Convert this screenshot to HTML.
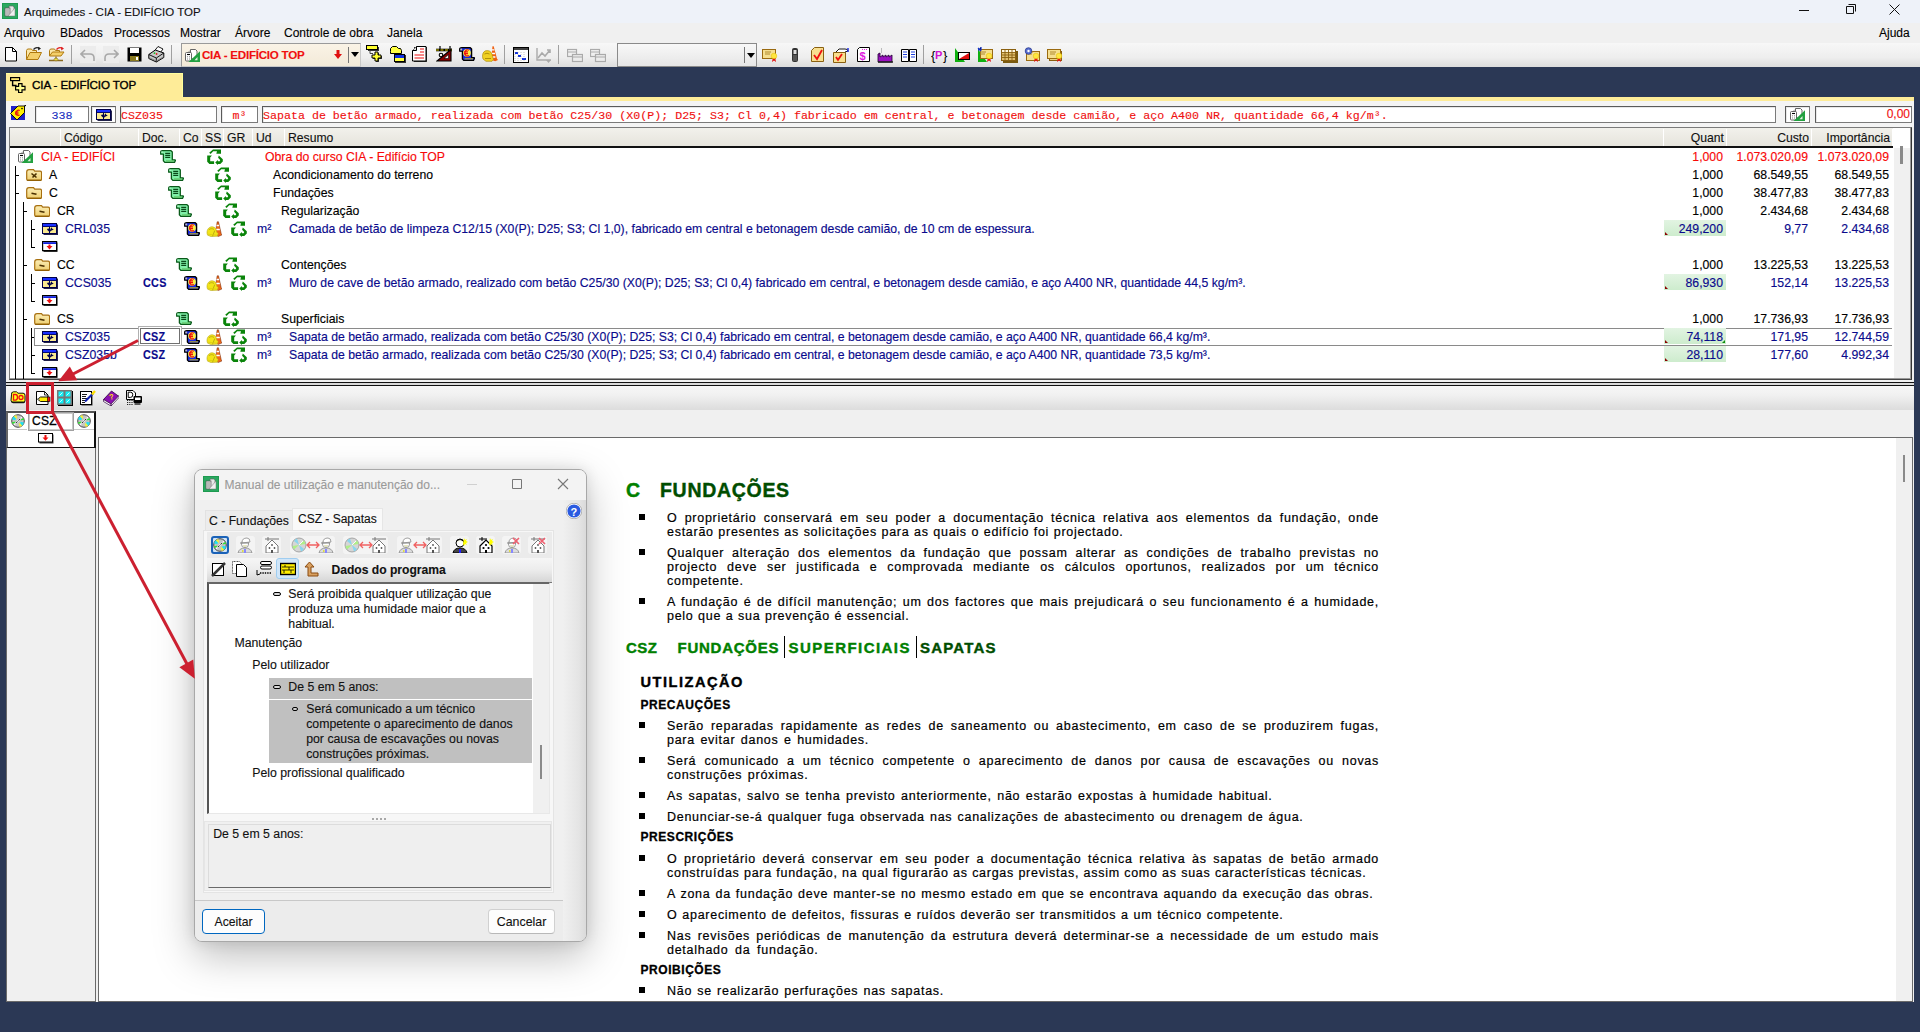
<!DOCTYPE html><html><head><meta charset="utf-8"><title>Arquimedes</title><style>
html,body{margin:0;padding:0;}
body{width:1920px;height:1032px;overflow:hidden;position:relative;background:#2b3855;font-family:"Liberation Sans", sans-serif;font-size:12px;color:#000;}
div{box-sizing:border-box;-webkit-text-stroke:0.12px currentColor;}
.t{position:absolute;white-space:pre;line-height:14px;}

</style></head><body>
<svg width="0" height="0" style="position:absolute">
<defs>
<symbol id="appico" viewBox="0 0 16 16"><rect x="0" y="0" width="16" height="16" fill="#1e9a50"/><rect x="1" y="1" width="14" height="14" fill="#2aa860"/><path d="M7 3h4l1 1v7H7z" fill="#e8e8e8" stroke="#666" stroke-width="0.7"/><rect x="3" y="5" width="5" height="8" fill="#ddd" stroke="#555" stroke-width="0.7"/><path d="M4 7h3M4 9h3M4 11h3" stroke="#666" stroke-width="0.6"/><path d="M6 13L13 5v8z" fill="#f0f0f0" stroke="#777" stroke-width="0.5"/></symbol>
<symbol id="obra" viewBox="0 0 15 13"><path d="M5.5 0.5h5l1.5 1.5v8h-6.5z" fill="#fff" stroke="#555" stroke-width="0.9"/><path d="M3 3.5l1.5-1.5h1" fill="none" stroke="#777" stroke-width="0.7"/><rect x="0.5" y="3.5" width="6" height="8.5" rx="1" fill="#fff" stroke="#555" stroke-width="0.9"/><path d="M2 5.5h3" stroke="#000" stroke-width="1.1"/><path d="M2 7.8h1M4 7.8h1M2 10h1M4 10h1" stroke="#777" stroke-width="0.9"/><path d="M3.5 13L15 13V2.2z" fill="#22a040"/><path d="M9.5 11.2h3v-3.2z" fill="#e0f0e0"/></symbol>
<symbol id="folderP" viewBox="0 0 16 12"><path d="M0.7 3Q0.7 0.6 3 0.6h4.5l1.2 1.6h5.3q1.6 0 1.6 1.8v6.2q0 1.2-1.2 1.2H2Q0.7 11.4 0.7 10z" fill="url(#fg)" stroke="#a87010" stroke-width="1.2"/><path d="M1 11.2h14" stroke="#8a5a00" stroke-width="1"/><path d="M5.5 4.5l5 4M6.5 8.5l4-4" stroke="#4a3000" stroke-width="1.6"/></symbol>
<symbol id="folderM" viewBox="0 0 16 12"><path d="M0.7 3Q0.7 0.6 3 0.6h4.5l1.2 1.6h5.3q1.6 0 1.6 1.8v6.2q0 1.2-1.2 1.2H2Q0.7 11.4 0.7 10z" fill="url(#fg)" stroke="#a87010" stroke-width="1.2"/><path d="M1 11.2h14" stroke="#8a5a00" stroke-width="1"/><path d="M5.5 6.2l5 1" stroke="#4a3000" stroke-width="1.6"/></symbol>
<linearGradient id="fg" x1="0" y1="0" x2="0" y2="1"><stop offset="0" stop-color="#fbeeb8"/><stop offset="1" stop-color="#efcf70"/></linearGradient>
<symbol id="item" viewBox="0 0 16 12"><rect x="1.5" y="1.5" width="14.5" height="10.5" fill="#22224a"/><rect x="0" y="0" width="15" height="11" fill="#00004a"/><rect x="1" y="1" width="13" height="2.2" fill="#1a30ff"/><rect x="1" y="4" width="6" height="6" fill="#faea90"/><rect x="8" y="4" width="6" height="6" fill="#faea90"/><path d="M6 5.3L8.2 6.8L9.3 4.2L10.3 5.8L11.8 6.6L8.6 8L7.4 10.3L6.8 8.2L5 6.7z" fill="#00004a"/></symbol>
<symbol id="addrow" viewBox="0 0 16 11"><rect x="1.5" y="1.5" width="14" height="9.5" fill="#333"/><rect x="0.6" y="0.6" width="14" height="9" fill="#fff" stroke="#000" stroke-width="1.2"/><rect x="1.2" y="1.2" width="12.8" height="1.8" fill="#1020e0"/><path d="M4.5 5h6l-3 3.5z" fill="#f01010"/><rect x="6.5" y="3.5" width="2" height="2.5" fill="#f01010"/></symbol>
<symbol id="scroll" viewBox="0 0 16 13"><path d="M2.5 0.7h8.5l1.3 1.3v7.8h2.8l0.4 0.6-1 2.1H5l-1.6-1.6V4.2H0.7V2.3Q0.7 0.7 2.5 0.7z" fill="#80f0a8" stroke="#0a5a1a" stroke-width="1.3" stroke-linejoin="round"/><path d="M1.3 2.2h1.3" stroke="#c0ffd0" stroke-width="1.2"/><path d="M5.2 3.4h5M5.2 5.4h5M5.2 7.4h5" stroke="#0a4a1a" stroke-width="1.1"/><path d="M6 11h8" stroke="#60c060" stroke-width="1.2"/></symbol>
<symbol id="recycle" viewBox="0 0 16 16"><g fill="#0a840a"><path d="M2.2 3.8L6 0.4H14V4.7H9.3L10 2.3H6.2L3.6 5z"/><path d="M0.2 6.4H4.9L3.2 8.4V12.3H7.1V15H2.4L0.2 12.8z"/><path d="M11.8 6.6L15.8 10.2V12.6L13.3 15H10.9V16L8.2 13.5L10.9 10.9V12.3H12.7L13.2 11L11.1 8.8z"/></g></symbol>
<symbol id="euro" viewBox="0 0 16 14"><path d="M2.7 0.7h8.6l1.3 1.3v8.6h2.7l0.2 0.6-1 2.2H4.7l-1.3-1.3V4.2H0.7V2Q0.7 0.7 2.7 0.7z" fill="#1a28e0" stroke="#000" stroke-width="1.3" stroke-linejoin="round"/><rect x="1.3" y="1.6" width="1.8" height="1.8" fill="#bbb"/><circle cx="8" cy="5.8" r="3.9" fill="#f8f040"/><path d="M10 3.2q-2.6-1.3-3.8 1.2t0.6 4q1.6 1 3.2 0M5 4.9h4M5 6.7h4" stroke="#f01010" stroke-width="1.2" fill="none"/><path d="M5.5 11.8h8.5" stroke="#a09a40" stroke-width="1.4"/></symbol>
<symbol id="helmet" viewBox="0 0 16 16"><path d="M9 13.5L11.2 0.8h1.3L15.2 12.5l0.6 1.6-3.6 1.4z" fill="#f06818" stroke="#6a2000" stroke-width="0.5"/><path d="M10.5 4.5h2.6M9.9 8.5h3.9" stroke="#fff" stroke-width="1.5"/><path d="M1 12.2C0.8 7.8 3.5 5.6 6.5 5.8C9.2 6 10.6 8.6 10.8 11.2L12.2 12.6L11.2 15.2L5 15.6L1.6 14.2z" fill="#f2e418" stroke="#b8a820" stroke-width="0.6"/><path d="M3 8.6C4.6 7.4 6.4 7.4 8 8.4M6.5 15.2L8.8 9.5" stroke="#b0a010" stroke-width="0.8" fill="none"/><path d="M2 13.2l8.8 1" stroke="#d8c810" stroke-width="0.7"/></symbol>
<symbol id="cd" viewBox="0 0 16 16"><circle cx="8" cy="8" r="7.2" fill="#c4c4c4" stroke="#333" stroke-width="1"/><path d="M8 8L3.2 2.6A7 7 0 0 1 6.2 1.2z" fill="#f0f040"/><path d="M8 8L1.2 6.2A7 7 0 0 1 3.2 2.6z" fill="#20e0f0"/><path d="M8 8L14.8 9.8A7 7 0 0 1 12.8 13.4z" fill="#20e0f0"/><path d="M8 8L12.8 13.4A7 7 0 0 1 9.8 14.8z" fill="#f0f040"/><path d="M8 8L1 9.5A7 7 0 0 0 2 11.5z" fill="#30e030"/><path d="M8 8L15 6.5A7 7 0 0 0 14 4.5z" fill="#30e030"/><circle cx="8" cy="8" r="3.2" fill="#c4c4c4"/><path d="M3.5 12.5l9-9" stroke="#fff" stroke-width="1.2"/><path d="M5.5 10.5l5-5" stroke="#000" stroke-width="0.9"/><circle cx="8" cy="8" r="0.9" fill="#fff"/></symbol>
<symbol id="tabico" viewBox="0 0 16 16"><rect x="0.6" y="0.6" width="9" height="3" fill="#ffe870" stroke="#000" stroke-width="1.2"/><path d="M2.6 4v4.5h4" stroke="#000" fill="none" stroke-width="1.4"/><path d="M8.6 6.6h3.4v2.8h3v3.4h-3v2.8H8.6v-2.8h-3V9.4h3z" fill="#ffff90" stroke="#000" stroke-width="1.2"/></symbol>
<symbol id="eurotag" viewBox="0 0 16 16"><rect x="1" y="1" width="14" height="14" fill="#2020c8"/><path d="M0.5 8.5L8 1h6.5v6.5L7 15z" fill="#ffee00" stroke="#000" stroke-width="0.9"/><path d="M14.5 1L16 0" stroke="#000" stroke-width="1.2"/><circle cx="12" cy="3.6" r="0.8" fill="#000"/><path d="M9.8 5.5q-2.2-1.2-3.4 1t0.4 3.6q1.4 0.8 2.8 0M5 7.2h3.5M5 8.9h3.5" stroke="#e81010" stroke-width="1.2" fill="none"/></symbol>
<symbol id="help" viewBox="0 0 16 16"><circle cx="8" cy="8" r="7.2" fill="#2a5ae0" stroke="#fff" stroke-width="1.2"/><circle cx="8" cy="8" r="7.8" fill="none" stroke="#777" stroke-width="0.5"/><text x="4.6" y="12.5" font-size="11" font-family="Liberation Sans" font-weight="bold" fill="#fff">?</text></symbol>
</defs></svg>
<div style="position:absolute;left:0px;top:0px;width:1920px;height:23px;background:#eef2f9"></div>
<svg style="position:absolute;left:2px;top:3px;" width="16" height="16"><use href="#appico" width="16" height="16"/></svg>
<div style="position:absolute;left:24px;top:5px;white-space:pre;font-size:11.5px;line-height:14px;color:#111">Arquimedes - CIA - EDIFÍCIO TOP</div>
<svg style="position:absolute;left:1790px;top:0" width="130" height="22"><path d="M9 10.5h10" stroke="#111" stroke-width="1"/><path d="M56.5 6.5h7v7h-7z M58.5 4.5h7v7" stroke="#111" fill="none" stroke-width="1"/><path d="M99.5 4.5l10 10M109.5 4.5l-10 10" stroke="#111" stroke-width="1"/></svg>
<div style="position:absolute;left:0px;top:23px;width:1920px;height:20px;background:#f0f0f0"></div>
<div style="position:absolute;left:4px;top:26px;white-space:pre;font-size:12px;line-height:14px;color:#000">Arquivo</div>
<div style="position:absolute;left:60px;top:26px;white-space:pre;font-size:12px;line-height:14px;color:#000">BDados</div>
<div style="position:absolute;left:114px;top:26px;white-space:pre;font-size:12px;line-height:14px;color:#000">Processos</div>
<div style="position:absolute;left:180px;top:26px;white-space:pre;font-size:12px;line-height:14px;color:#000">Mostrar</div>
<div style="position:absolute;left:235px;top:26px;white-space:pre;font-size:12px;line-height:14px;color:#000">Árvore</div>
<div style="position:absolute;left:284px;top:26px;white-space:pre;font-size:12px;line-height:14px;color:#000">Controle de obra</div>
<div style="position:absolute;left:387px;top:26px;white-space:pre;font-size:12px;line-height:14px;color:#000">Janela</div>
<div style="position:absolute;left:1879px;top:26px;white-space:pre;font-size:12px;line-height:14px;color:#000">Ajuda</div>
<div style="position:absolute;left:0px;top:43px;width:1920px;height:24px;background:linear-gradient(#f7f7f7,#eeeeee 60%,#dcdcdc)"></div>
<svg style="position:absolute;left:4px;top:47px" width="14" height="15" viewBox="0 0 14 15"><path d="M1.5 0.5h7l4 4v9.5h-11z" fill="#fff" stroke="#000"/><path d="M8.5 0.5v4h4" fill="none" stroke="#000"/></svg>
<svg style="position:absolute;left:25px;top:46px" width="17" height="15" viewBox="0 0 17 15"><path d="M1.5 13.5V4.5l1-1.5h4l1 1.5h4v2" fill="#fbe7a8" stroke="#b07a10" stroke-width="1"/><path d="M1.5 13.5l3.5-7h11.5l-3.5 7z" fill="#f4cf6a" stroke="#b07a10" stroke-width="1"/><path d="M8.5 3.5q2.5-3 6-1.2" stroke="#222" fill="none" stroke-width="1.2"/><path d="M13 0.8l3 1.8-2.8 1.8z" fill="#222"/></svg>
<svg style="position:absolute;left:48px;top:46px" width="17" height="16" viewBox="0 0 17 16"><path d="M1.5 10V4.5l1-1.5h4l1 1.5h4v2" fill="#fbe7a8" stroke="#b07a10" stroke-width="1"/><path d="M1.5 10l3-4h11.5l-3 4z" fill="#f4cf6a" stroke="#b07a10" stroke-width="1"/><path d="M8 10.5v3M1 14.5h14" stroke="#8a6a20" stroke-width="1.3"/><ellipse cx="8" cy="13.5" rx="2" ry="1.3" fill="#e8e040" stroke="#8a6a20" stroke-width="0.6"/><path d="M8.5 3.5q2.5-3 6-1.2" stroke="#e02020" fill="none" stroke-width="1.2"/><path d="M13 0.8l3 1.8-2.8 1.8z" fill="#e02020"/></svg>
<div style="position:absolute;left:71px;top:45px;width:1px;height:19px;background:#a0a0a0"></div>
<div style="position:absolute;left:80px;top:46px;width:16px;height:17px;background:#ececec"></div>
<svg style="position:absolute;left:80px;top:48px" width="16" height="15" viewBox="0 0 16 15"><path d="M5 2L1 6l4 4M1.5 6H10q4 0 4 4v3" fill="none" stroke="#a8a8a8" stroke-width="1.6"/></svg>
<div style="position:absolute;left:103px;top:46px;width:16px;height:17px;background:#ececec"></div>
<svg style="position:absolute;left:103px;top:48px" width="16" height="15" viewBox="0 0 16 15"><path d="M11 2l4 4-4 4M14.5 6H6q-4 0-4 4v3" fill="none" stroke="#a8a8a8" stroke-width="1.6"/></svg>
<svg style="position:absolute;left:127px;top:47px" width="15" height="15" viewBox="0 0 15 15"><rect x="0.5" y="0.5" width="14" height="14" fill="#000"/><rect x="3" y="1" width="9" height="5" fill="#fff"/><rect x="3" y="9" width="9" height="5" fill="#8a7a20"/><rect x="9" y="10" width="2" height="3" fill="#fff"/></svg>
<svg style="position:absolute;left:148px;top:46px" width="17" height="17" viewBox="0 0 17 17"><path d="M6 5.5l4-5 5 2.5-3 4z" fill="#fff" stroke="#000" stroke-width="0.9"/><path d="M0.8 8.5l6.5-4.5 8.5 3v4.5l-7.5 4.5-7.5-3.5z" fill="#c8c8c8" stroke="#000" stroke-width="1"/><path d="M0.8 8.5l7.5 3.5 7.5-5M8.3 12v4" stroke="#000" fill="none" stroke-width="0.9"/><path d="M1 11.5l7.3 3.5 7.3-4.2" stroke="#777" fill="none" stroke-width="0.8"/><circle cx="6.5" cy="7.2" r="0.9" fill="#20c020"/><circle cx="8.6" cy="8" r="0.9" fill="#e02020"/></svg>
<div style="position:absolute;left:171px;top:45px;width:1px;height:19px;background:#a0a0a0"></div>
<div style="position:absolute;left:181px;top:43px;width:180px;height:24px;background:linear-gradient(#faf3e6,#f3ead8);border:1px solid #9a9a9a;border-right-color:#c8c8c8;border-bottom-color:#c8c8c8"></div>
<svg style="position:absolute;left:185px;top:49px;" width="15" height="13"><use href="#obra" width="15" height="13"/></svg>
<div style="position:absolute;left:202px;top:47px;white-space:pre;font-size:11.6px;font-weight:bold;color:#f01010;line-height:15px;letter-spacing:-0.25px">CIA - EDIFÍCIO TOP</div>
<svg style="position:absolute;left:334px;top:50px" width="8" height="9" viewBox="0 0 8 9"><path d="M2.5 0h3v4h2.5l-4 5-4-5h2.5z" fill="#e01010"/></svg>
<div style="position:absolute;left:348px;top:47px;width:1px;height:16px;background:#777"></div>
<svg style="position:absolute;left:351px;top:52px" width="8" height="5" viewBox="0 0 8 5"><path d="M0 0h8l-4 5z" fill="#000"/></svg>
<svg style="position:absolute;left:366px;top:45px" width="17" height="18" viewBox="0 0 17 18"><rect x="2" y="2" width="11" height="4" fill="#333"/><rect x="0.5" y="0.5" width="11" height="4" fill="#ffff30" stroke="#000"/><path d="M4 5.5v3h3" stroke="#444" fill="none"/><path d="M10 8h3v3h3v3h-3v3h-3v-3H7v-3h3z" fill="#333"/><path d="M9 7h3v3h3v3h-3v3H9v-3H6v-3h3z" fill="#ffff30" stroke="#000"/></svg>
<svg style="position:absolute;left:389px;top:45px" width="17" height="18" viewBox="0 0 17 18"><path d="M1.5 6.5V3.5l2-2h4l2 2h2l1 2v3h-11z" fill="#ffff40" stroke="#000"/><rect x="6" y="10" width="11" height="8" fill="#333"/><rect x="5.5" y="9.5" width="10" height="7" fill="#1030e0" stroke="#000"/><rect x="6" y="13" width="9" height="3" fill="#ffff40"/></svg>
<svg style="position:absolute;left:412px;top:46px" width="16" height="17" viewBox="0 0 16 17"><rect x="2" y="1" width="13" height="15" fill="#333"/><path d="M4.5 0.5h9.5v14.5h-13.5v-10.5z" fill="#fff" stroke="#000"/><path d="M0.5 4.5h4v-4" fill="#ddd" stroke="#000"/><path d="M8 3h4M8 6h4M2.5 9h9.5M2.5 12h9.5" stroke="#f01010" stroke-width="1.1"/></svg>
<svg style="position:absolute;left:436px;top:46px" width="16" height="16" viewBox="0 0 16 16"><path d="M4 0v4M14 0v4" stroke="#000" stroke-width="1.2"/><path d="M0 4h16" stroke="#000" stroke-width="2.6"/><path d="M0 4h16" stroke="#ffee00" stroke-width="0.9" stroke-dasharray="3 1.5"/><path d="M1 15L15 3.5V15z" fill="#8a0000" stroke="#000" stroke-width="1.1"/><path d="M8 12.5l4.5-4v4z" fill="#eee" stroke="#000" stroke-width="0.6"/><circle cx="5" cy="9" r="1.8" fill="none" stroke="#000" stroke-width="1.1"/></svg>
<svg style="position:absolute;left:459px;top:47px;" width="16" height="14"><use href="#euro" width="16" height="14"/></svg>
<svg style="position:absolute;left:482px;top:46px" width="16" height="16" viewBox="0 0 16 16"><path d="M10.5 0.3h1.2l3.3 12.5 1 1.2-2.8 1.3-4.2-1.5z" fill="#f06010"/><path d="M9.8 3.8h2.6M9.2 7.5h3.8M8.8 11h4.6" stroke="#fff" stroke-width="1.3"/><path d="M0.5 10.5Q0.5 4.5 5.5 4.6Q10 4.8 10.8 11.5L11.6 13.2 10 15.3H4L1 13z" fill="#f0d020" stroke="#b09010" stroke-width="0.7"/><path d="M2.5 8q2.4-1.5 5 0M3 12.5h6" stroke="#a08000" stroke-width="0.8" fill="none"/></svg>
<div style="position:absolute;left:504px;top:45px;width:1px;height:19px;background:#a0a0a0"></div>
<svg style="position:absolute;left:513px;top:47px" width="16" height="16" viewBox="0 0 16 16"><rect x="0.5" y="0.5" width="15" height="15" fill="#fff" stroke="#000"/><path d="M1 2h14" stroke="#000" stroke-width="1.5"/><path d="M2 6h3M5 9h3M9 12h4" stroke="#1030e0" stroke-width="2"/><path d="M2 5v9M5 5v9M8 5v9M11 5v9" stroke="#888" stroke-width="0.5" stroke-dasharray="1 1"/></svg>
<svg style="position:absolute;left:536px;top:47px" width="16" height="16" viewBox="0 0 16 16"><path d="M1 1v12h14" stroke="#aaa" stroke-width="1.4" fill="none"/><path d="M2 11l4-5 3 3 5-6M11 3h3v3" stroke="#aaa" stroke-width="1.6" fill="none"/><path d="M10 13h5l-2.5 3z" fill="#aaa"/></svg>
<div style="position:absolute;left:558px;top:45px;width:1px;height:19px;background:#a0a0a0"></div>
<svg style="position:absolute;left:567px;top:48px" width="16" height="15" viewBox="0 0 16 15"><rect x="0.5" y="1.5" width="9" height="7" fill="none" stroke="#aaa" stroke-width="1.2"/><rect x="5.5" y="6.5" width="10" height="7" fill="#ececec" stroke="#aaa" stroke-width="1.2"/><path d="M1 4h8M6 9h9" stroke="#aaa"/></svg>
<svg style="position:absolute;left:590px;top:48px" width="16" height="15" viewBox="0 0 16 15"><rect x="0.5" y="1.5" width="9" height="7" fill="none" stroke="#aaa" stroke-width="1.2"/><rect x="5.5" y="6.5" width="10" height="7" fill="#ececec" stroke="#aaa" stroke-width="1.2"/><path d="M1 4h8M6 9h9" stroke="#aaa"/></svg>
<div style="position:absolute;left:617px;top:43px;width:140px;height:24px;background:linear-gradient(#f8f8f8,#e6e6e6);border:1px solid #8a8a8a"></div>
<div style="position:absolute;left:744px;top:47px;width:1px;height:16px;background:#777"></div>
<svg style="position:absolute;left:747px;top:53px" width="8" height="5" viewBox="0 0 8 5"><path d="M0 0h8l-4 5z" fill="#000"/></svg>
<svg style="position:absolute;left:762px;top:47px" width="16" height="16" viewBox="0 0 16 16"><rect x="0.5" y="2.5" width="13" height="9" fill="#f5df90" stroke="#9a6a10"/><path d="M3 5h6M3 7h5" stroke="#b08a30"/><path d="M11 10l-1 5 2-1.5 2 1.5-1-5" fill="#e01010"/><circle cx="12" cy="9" r="2.8" fill="#ffe640" stroke="#e0c000" stroke-width="0.5"/></svg>
<svg style="position:absolute;left:791px;top:47px" width="8" height="16" viewBox="0 0 8 16"><rect x="1" y="1" width="6" height="14" rx="2" fill="#333"/><rect x="2.5" y="3" width="3" height="4" fill="#ddd"/><path d="M2.5 9h1M4.5 9h1M2.5 11h1M4.5 11h1M2.5 13h1M4.5 13h1" stroke="#bbb"/></svg>
<svg style="position:absolute;left:810px;top:47px" width="15" height="16" viewBox="0 0 15 16"><path d="M1.5 3.5l3-3h9v14h-12z" fill="#f8df90" stroke="#8a6010"/><path d="M4 8l3 4 5-9" stroke="#f01010" stroke-width="1.8" fill="none"/></svg>
<svg style="position:absolute;left:833px;top:47px" width="16" height="16" viewBox="0 0 16 16"><path d="M0.5 5.5h12v10h-12z" fill="#f8df90" stroke="#8a6010"/><path d="M3 10l2 3 4-6" stroke="#f01010" stroke-width="1.8" fill="none"/><path d="M3 5l3-3h6q3 0 3 2l-3 1" fill="#fff" stroke="#000" stroke-width="0.9"/><path d="M15 1v4" stroke="#2030e0" stroke-width="1.5"/></svg>
<svg style="position:absolute;left:856px;top:47px" width="15" height="16" viewBox="0 0 15 16"><path d="M1.5 2.5l2-2h10v14h-12z" fill="#fff" stroke="#000"/><text x="3.5" y="13" font-size="11" font-family="Liberation Sans" font-weight="bold" fill="#e020e0">$</text><path d="M6 2.5h1M8 2.5h1M10 2.5h1" stroke="#e020e0"/></svg>
<svg style="position:absolute;left:877px;top:47px" width="16" height="16" viewBox="0 0 16 16"><path d="M1 15V7l2-1v4l3-2v2l3-2v2l3-2v2l3-2v7z" fill="#9a10c0" stroke="#200030" stroke-width="0.8"/><path d="M4 1h1v5H4z" fill="#bbb"/><path d="M1 15h15" stroke="#222" stroke-width="1.5"/></svg>
<svg style="position:absolute;left:901px;top:47px" width="16" height="16" viewBox="0 0 16 16"><path d="M0.5 2.5h7v12h-7zM8.5 2.5h7v12h-7z" fill="#fff" stroke="#000"/><path d="M2 5h4M2 7.5h4M2 10h4M10 5h4M10 7.5h4M10 10h4" stroke="#2040e0" stroke-width="1.2"/></svg>
<div style="position:absolute;left:923px;top:45px;width:1px;height:19px;background:#a0a0a0"></div>
<svg style="position:absolute;left:931px;top:47px" width="17" height="16" viewBox="0 0 17 16"><text x="0" y="13" font-size="13" font-family="Liberation Sans" fill="#000">{</text><text x="12" y="13" font-size="13" font-family="Liberation Sans" fill="#000">}</text><text x="4" y="12" font-size="11" font-family="Liberation Sans" font-weight="bold" fill="#d010d0">P</text></svg>
<svg style="position:absolute;left:954px;top:47px" width="16" height="16" viewBox="0 0 16 16"><path d="M1 1v14h10z" fill="#10b010"/><rect x="4.5" y="5.5" width="11" height="7" fill="#fff" stroke="#000"/><path d="M5 12l10-6v6z" fill="#e01010"/></svg>
<svg style="position:absolute;left:977px;top:47px" width="17" height="16" viewBox="0 0 17 16"><path d="M1 2v13h9z" fill="#10b010"/><rect x="3.5" y="2.5" width="12" height="9" fill="#f5df90" stroke="#9a6a10"/><path d="M3 5h6M3 7h5" stroke="#b08a30"/><path d="M11 10l-1 5 2-1.5 2 1.5-1-5" fill="#e01010"/><circle cx="12" cy="9" r="2.8" fill="#ffe640" stroke="#e0c000" stroke-width="0.5"/><path d="M1 1l3 3M1 3h3V0" stroke="#1030d0" stroke-width="1.2"/></svg>
<svg style="position:absolute;left:1001px;top:47px" width="17" height="16" viewBox="0 0 17 16"><rect x="2" y="4" width="15" height="12" fill="#7a5a10"/><rect x="0.5" y="2.5" width="14" height="11" fill="#e0c070" stroke="#8a6010"/><rect x="1" y="3" width="13" height="2.5" fill="#fff8e0"/><path d="M1 5.5h13M1 8h13M1 10.5h13M4 3v10M7.5 3v10M11 3v10" stroke="#8a6010" stroke-width="0.9"/></svg>
<svg style="position:absolute;left:1024px;top:47px" width="16" height="16" viewBox="0 0 16 16"><rect x="2.5" y="4.5" width="13" height="9" fill="#f5df90" stroke="#9a6a10"/><path d="M3 5h6M3 7h5" stroke="#b08a30"/><path d="M11 10l-1 5 2-1.5 2 1.5-1-5" fill="#e01010"/><circle cx="12" cy="9" r="2.8" fill="#ffe640" stroke="#e0c000" stroke-width="0.5"/><circle cx="4.5" cy="4" r="3.3" fill="#5a70d0" stroke="#2a3a90" stroke-width="0.8"/><circle cx="4.5" cy="4" r="1.2" fill="#fff"/></svg>
<svg style="position:absolute;left:1047px;top:47px" width="16" height="16" viewBox="0 0 16 16"><rect x="2.5" y="4.5" width="12" height="9" fill="#e8cf80" stroke="#8a6010"/><rect x="0.5" y="2.5" width="13" height="9" fill="#f5df90" stroke="#9a6a10"/><path d="M3 5h6M3 7h5" stroke="#b08a30"/><path d="M11 10l-1 5 2-1.5 2 1.5-1-5" fill="#e01010"/><circle cx="12" cy="9" r="2.8" fill="#ffe640" stroke="#e0c000" stroke-width="0.5"/></svg>
<div style="position:absolute;left:6px;top:73px;width:177px;height:24px;background:#feec98;border-top:1px solid #ffffa0;border-right:1px solid #ffff9a"></div>
<svg style="position:absolute;left:10px;top:77px;" width="16" height="16"><use href="#tabico" width="16" height="16"/></svg>
<div style="position:absolute;left:32px;top:78px;white-space:pre;font-size:11.6px;line-height:14px;color:#000;letter-spacing:-0.1px;-webkit-text-stroke:0.35px #000">CIA - EDIFÍCIO TOP</div>
<div style="position:absolute;left:6px;top:97px;width:1908px;height:4px;background:#feec98"></div>
<div style="position:absolute;left:6px;top:101px;width:1908px;height:901px;background:#f0f0f0"></div>
<div style="position:absolute;left:6px;top:101px;width:1908px;height:26px;background:#f4f4f4"></div>
<svg style="position:absolute;left:10px;top:105px;" width="16" height="16"><use href="#eurotag" width="16" height="16"/></svg>
<div style="position:absolute;left:35px;top:106px;width:54px;height:17px;background:#fff;border:1px solid #5a5a5a;border-right-color:#7a7a7a;border-bottom-color:#7a7a7a;box-shadow:inset 1px 1px 0 #e8e8e8"></div>
<div style="position:absolute;left:35px;top:108px;white-space:pre;width:54px;text-align:center;font-family:'Liberation Mono', monospace;font-size:11.65px;line-height:15px;color:#2030c0">338</div>
<div style="position:absolute;left:91px;top:106px;width:25px;height:17px;background:#fff;border:1px solid #5a5a5a;border-right-color:#7a7a7a;border-bottom-color:#7a7a7a;box-shadow:inset 1px 1px 0 #e8e8e8"></div>
<svg style="position:absolute;left:96px;top:109px;" width="16" height="12"><use href="#item" width="16" height="12"/></svg>
<div style="position:absolute;left:120px;top:106px;width:97px;height:17px;background:#fff;border:1px solid #5a5a5a;border-right-color:#7a7a7a;border-bottom-color:#7a7a7a;box-shadow:inset 1px 1px 0 #e8e8e8"></div>
<div style="position:absolute;left:121px;top:108px;white-space:pre;font-family:'Liberation Mono', monospace;font-size:11.65px;line-height:15px;color:#f01010">CSZ035</div>
<div style="position:absolute;left:221px;top:106px;width:37px;height:17px;background:#fff;border:1px solid #5a5a5a;border-right-color:#7a7a7a;border-bottom-color:#7a7a7a;box-shadow:inset 1px 1px 0 #e8e8e8"></div>
<div style="position:absolute;left:221px;top:108px;white-space:pre;width:37px;text-align:center;font-family:'Liberation Mono', monospace;font-size:11.65px;line-height:15px;color:#f01010">m³</div>
<div style="position:absolute;left:262px;top:106px;width:1514px;height:17px;background:#fff;border:1px solid #5a5a5a;border-right-color:#7a7a7a;border-bottom-color:#7a7a7a;box-shadow:inset 1px 1px 0 #e8e8e8"></div>
<div style="position:absolute;left:263px;top:108px;white-space:pre;font-family:'Liberation Mono', monospace;font-size:11.65px;line-height:15px;color:#f01010">Sapata de betão armado, realizada com betão C25/30 (X0(P); D25; S3; Cl 0,4) fabricado em central, e betonagem desde camião, e aço A400 NR, quantidade 66,4 kg/m³.</div>
<div style="position:absolute;left:1785px;top:106px;width:25px;height:17px;background:#fff;border:1px solid #5a5a5a;border-right-color:#7a7a7a;border-bottom-color:#7a7a7a;box-shadow:inset 1px 1px 0 #e8e8e8"></div>
<svg style="position:absolute;left:1790px;top:108px;" width="15" height="13"><use href="#obra" width="15" height="13"/></svg>
<div style="position:absolute;left:1815px;top:106px;width:97px;height:17px;background:#fff;border:1px solid #5a5a5a;border-right-color:#7a7a7a;border-bottom-color:#7a7a7a;box-shadow:inset 1px 1px 0 #e8e8e8"></div>
<div style="position:absolute;left:1815px;top:107px;white-space:pre;width:95px;text-align:right;font-size:12px;line-height:15px;color:#f01010">0,00</div>
<div style="position:absolute;left:9px;top:127px;width:1903px;height:253px;background:#fff;border:1px solid #7a7a7a;border-right:1px solid #333;border-bottom:1px solid #444;box-shadow:inset -1px -1px 0 #999"></div>
<div style="position:absolute;left:10px;top:128px;width:1883px;height:20px;background:linear-gradient(#f2f1ec,#e6e4dc);border-bottom:2px solid #111"></div>
<div style="position:absolute;left:60px;top:129px;width:1px;height:17px;background:#c8c6c0;border-right:1px solid #fff"></div>
<div style="position:absolute;left:138px;top:129px;width:1px;height:17px;background:#c8c6c0;border-right:1px solid #fff"></div>
<div style="position:absolute;left:179px;top:129px;width:1px;height:17px;background:#c8c6c0;border-right:1px solid #fff"></div>
<div style="position:absolute;left:201px;top:129px;width:1px;height:17px;background:#c8c6c0;border-right:1px solid #fff"></div>
<div style="position:absolute;left:223px;top:129px;width:1px;height:17px;background:#c8c6c0;border-right:1px solid #fff"></div>
<div style="position:absolute;left:252px;top:129px;width:1px;height:17px;background:#c8c6c0;border-right:1px solid #fff"></div>
<div style="position:absolute;left:284px;top:129px;width:1px;height:17px;background:#c8c6c0;border-right:1px solid #fff"></div>
<div style="position:absolute;left:1663px;top:129px;width:1px;height:17px;background:#c8c6c0;border-right:1px solid #fff"></div>
<div style="position:absolute;left:1726px;top:129px;width:1px;height:17px;background:#c8c6c0;border-right:1px solid #fff"></div>
<div style="position:absolute;left:1811px;top:129px;width:1px;height:17px;background:#c8c6c0;border-right:1px solid #fff"></div>
<div style="position:absolute;left:1892px;top:129px;width:1px;height:17px;background:#c8c6c0;border-right:1px solid #fff"></div>
<div style="position:absolute;left:64px;top:131px;white-space:pre;font-size:12.2px;line-height:14px;color:#111">Código</div>
<div style="position:absolute;left:142px;top:131px;white-space:pre;font-size:12.2px;line-height:14px;color:#111">Doc.</div>
<div style="position:absolute;left:183px;top:131px;white-space:pre;font-size:12.2px;line-height:14px;color:#111">Co</div>
<div style="position:absolute;left:205px;top:131px;white-space:pre;font-size:12.2px;line-height:14px;color:#111">SS</div>
<div style="position:absolute;left:227px;top:131px;white-space:pre;font-size:12.2px;line-height:14px;color:#111">GR</div>
<div style="position:absolute;left:256px;top:131px;white-space:pre;font-size:12.2px;line-height:14px;color:#111">Ud</div>
<div style="position:absolute;left:288px;top:131px;white-space:pre;font-size:12.2px;line-height:14px;color:#111">Resumo</div>
<div style="position:absolute;left:1604px;top:131px;white-space:pre;width:120px;text-align:right;font-size:12.2px;line-height:14px;color:#111">Quant</div>
<div style="position:absolute;left:1689px;top:131px;white-space:pre;width:120px;text-align:right;font-size:12.2px;line-height:14px;color:#111">Custo</div>
<div style="position:absolute;left:1770px;top:131px;white-space:pre;width:120px;text-align:right;font-size:12.2px;line-height:14px;color:#111">Importância</div>
<div style="position:absolute;left:1894px;top:148px;width:16px;height:230px;background:#f0f0f0"></div>
<div style="position:absolute;left:1900px;top:146px;width:3px;height:18px;background:#8a8a8a"></div>
<div style="position:absolute;left:15px;top:166px;width:1px;height:213px;background:#000"></div>
<div style="position:absolute;left:23px;top:202px;width:1px;height:177px;background:#000"></div>
<div style="position:absolute;left:31px;top:220px;width:1px;height:28px;background:#000"></div>
<div style="position:absolute;left:31px;top:247px;width:4px;height:1px;background:#000"></div>
<div style="position:absolute;left:31px;top:274px;width:1px;height:28px;background:#000"></div>
<div style="position:absolute;left:31px;top:301px;width:4px;height:1px;background:#000"></div>
<div style="position:absolute;left:31px;top:328px;width:1px;height:46px;background:#000"></div>
<div style="position:absolute;left:31px;top:373px;width:4px;height:1px;background:#000"></div>
<svg style="position:absolute;left:18px;top:150px;" width="15" height="13"><use href="#obra" width="15" height="13"/></svg>
<div style="position:absolute;left:41px;top:150px;white-space:pre;font-size:12.25px;line-height:14px;-webkit-text-stroke:0.15px currentColor;color:#f80808">CIA - EDIFÍCI</div>
<svg style="position:absolute;left:160px;top:150px;" width="16" height="13"><use href="#scroll" width="16" height="13"/></svg>
<svg style="position:absolute;left:207px;top:149px;" width="16" height="16"><use href="#recycle" width="16" height="16"/></svg>
<div style="position:absolute;left:265px;top:150px;white-space:pre;font-size:12.25px;line-height:14px;-webkit-text-stroke:0.15px currentColor;color:#f80808">Obra do curso CIA - Edifício TOP</div>
<div style="position:absolute;left:1573px;top:150px;white-space:pre;font-size:12.25px;line-height:14px;-webkit-text-stroke:0.15px currentColor;width:150px;text-align:right;color:#f80808">1,000</div>
<div style="position:absolute;left:1658px;top:150px;white-space:pre;font-size:12.25px;line-height:14px;-webkit-text-stroke:0.15px currentColor;width:150px;text-align:right;color:#f80808">1.073.020,09</div>
<div style="position:absolute;left:1739px;top:150px;white-space:pre;font-size:12.25px;line-height:14px;-webkit-text-stroke:0.15px currentColor;width:150px;text-align:right;color:#f80808">1.073.020,09</div>
<div style="position:absolute;left:15px;top:175px;width:4px;height:1px;background:#000"></div>
<svg style="position:absolute;left:26px;top:169px;" width="16" height="12"><use href="#folderP" width="16" height="12"/></svg>
<div style="position:absolute;left:49px;top:168px;white-space:pre;font-size:12.25px;line-height:14px;-webkit-text-stroke:0.15px currentColor;color:#000">A</div>
<svg style="position:absolute;left:168px;top:168px;" width="16" height="13"><use href="#scroll" width="16" height="13"/></svg>
<svg style="position:absolute;left:215px;top:167px;" width="16" height="16"><use href="#recycle" width="16" height="16"/></svg>
<div style="position:absolute;left:273px;top:168px;white-space:pre;font-size:12.25px;line-height:14px;-webkit-text-stroke:0.15px currentColor;color:#000">Acondicionamento do terreno</div>
<div style="position:absolute;left:1573px;top:168px;white-space:pre;font-size:12.25px;line-height:14px;-webkit-text-stroke:0.15px currentColor;width:150px;text-align:right;color:#000">1,000</div>
<div style="position:absolute;left:1658px;top:168px;white-space:pre;font-size:12.25px;line-height:14px;-webkit-text-stroke:0.15px currentColor;width:150px;text-align:right;color:#000">68.549,55</div>
<div style="position:absolute;left:1739px;top:168px;white-space:pre;font-size:12.25px;line-height:14px;-webkit-text-stroke:0.15px currentColor;width:150px;text-align:right;color:#000">68.549,55</div>
<div style="position:absolute;left:15px;top:193px;width:4px;height:1px;background:#000"></div>
<svg style="position:absolute;left:26px;top:187px;" width="16" height="12"><use href="#folderM" width="16" height="12"/></svg>
<div style="position:absolute;left:49px;top:186px;white-space:pre;font-size:12.25px;line-height:14px;-webkit-text-stroke:0.15px currentColor;color:#000">C</div>
<svg style="position:absolute;left:168px;top:186px;" width="16" height="13"><use href="#scroll" width="16" height="13"/></svg>
<svg style="position:absolute;left:215px;top:185px;" width="16" height="16"><use href="#recycle" width="16" height="16"/></svg>
<div style="position:absolute;left:273px;top:186px;white-space:pre;font-size:12.25px;line-height:14px;-webkit-text-stroke:0.15px currentColor;color:#000">Fundações</div>
<div style="position:absolute;left:1573px;top:186px;white-space:pre;font-size:12.25px;line-height:14px;-webkit-text-stroke:0.15px currentColor;width:150px;text-align:right;color:#000">1,000</div>
<div style="position:absolute;left:1658px;top:186px;white-space:pre;font-size:12.25px;line-height:14px;-webkit-text-stroke:0.15px currentColor;width:150px;text-align:right;color:#000">38.477,83</div>
<div style="position:absolute;left:1739px;top:186px;white-space:pre;font-size:12.25px;line-height:14px;-webkit-text-stroke:0.15px currentColor;width:150px;text-align:right;color:#000">38.477,83</div>
<div style="position:absolute;left:23px;top:211px;width:4px;height:1px;background:#000"></div>
<svg style="position:absolute;left:34px;top:205px;" width="16" height="12"><use href="#folderM" width="16" height="12"/></svg>
<div style="position:absolute;left:57px;top:204px;white-space:pre;font-size:12.25px;line-height:14px;-webkit-text-stroke:0.15px currentColor;color:#000">CR</div>
<svg style="position:absolute;left:176px;top:204px;" width="16" height="13"><use href="#scroll" width="16" height="13"/></svg>
<svg style="position:absolute;left:223px;top:203px;" width="16" height="16"><use href="#recycle" width="16" height="16"/></svg>
<div style="position:absolute;left:281px;top:204px;white-space:pre;font-size:12.25px;line-height:14px;-webkit-text-stroke:0.15px currentColor;color:#000">Regularização</div>
<div style="position:absolute;left:1573px;top:204px;white-space:pre;font-size:12.25px;line-height:14px;-webkit-text-stroke:0.15px currentColor;width:150px;text-align:right;color:#000">1,000</div>
<div style="position:absolute;left:1658px;top:204px;white-space:pre;font-size:12.25px;line-height:14px;-webkit-text-stroke:0.15px currentColor;width:150px;text-align:right;color:#000">2.434,68</div>
<div style="position:absolute;left:1739px;top:204px;white-space:pre;font-size:12.25px;line-height:14px;-webkit-text-stroke:0.15px currentColor;width:150px;text-align:right;color:#000">2.434,68</div>
<div style="position:absolute;left:31px;top:229px;width:4px;height:1px;background:#000"></div>
<svg style="position:absolute;left:42px;top:223px;" width="16" height="12"><use href="#item" width="16" height="12"/></svg>
<div style="position:absolute;left:65px;top:222px;white-space:pre;font-size:12.25px;line-height:14px;-webkit-text-stroke:0.15px currentColor;color:#0a0a8c">CRL035</div>
<svg style="position:absolute;left:184px;top:222px;" width="16" height="14"><use href="#euro" width="16" height="14"/></svg>
<svg style="position:absolute;left:206px;top:221px;" width="16" height="16"><use href="#helmet" width="16" height="16"/></svg>
<svg style="position:absolute;left:231px;top:221px;" width="16" height="16"><use href="#recycle" width="16" height="16"/></svg>
<div style="position:absolute;left:257px;top:222px;white-space:pre;font-size:12.25px;line-height:14px;-webkit-text-stroke:0.15px currentColor;color:#0a0a8c">m²</div>
<div style="position:absolute;left:289px;top:222px;white-space:pre;font-size:12.25px;line-height:14px;-webkit-text-stroke:0.15px currentColor;color:#0a0a8c">Camada de betão de limpeza C12/15 (X0(P); D25; S3; Cl 1,0), fabricado em central e betonagem desde camião, de 10 cm de espessura.</div>
<div style="position:absolute;left:1664px;top:220px;width:62px;height:16px;background:linear-gradient(#e2f4e2,#cdeccd)"></div>
<svg style="position:absolute;left:1665px;top:232px" width="3" height="3" viewBox="0 0 3 3"><path d="M0 0L3 3H0z" fill="#8a0000"/></svg>
<div style="position:absolute;left:1573px;top:222px;white-space:pre;font-size:12.25px;line-height:14px;-webkit-text-stroke:0.15px currentColor;width:150px;text-align:right;color:#0a0a8c">249,200</div>
<div style="position:absolute;left:1658px;top:222px;white-space:pre;font-size:12.25px;line-height:14px;-webkit-text-stroke:0.15px currentColor;width:150px;text-align:right;color:#0a0a8c">9,77</div>
<div style="position:absolute;left:1739px;top:222px;white-space:pre;font-size:12.25px;line-height:14px;-webkit-text-stroke:0.15px currentColor;width:150px;text-align:right;color:#0a0a8c">2.434,68</div>
<div style="position:absolute;left:31px;top:247px;width:4px;height:1px;background:#000"></div>
<svg style="position:absolute;left:42px;top:241px;" width="16" height="11"><use href="#addrow" width="16" height="11"/></svg>
<div style="position:absolute;left:23px;top:265px;width:4px;height:1px;background:#000"></div>
<svg style="position:absolute;left:34px;top:259px;" width="16" height="12"><use href="#folderM" width="16" height="12"/></svg>
<div style="position:absolute;left:57px;top:258px;white-space:pre;font-size:12.25px;line-height:14px;-webkit-text-stroke:0.15px currentColor;color:#000">CC</div>
<svg style="position:absolute;left:176px;top:258px;" width="16" height="13"><use href="#scroll" width="16" height="13"/></svg>
<svg style="position:absolute;left:223px;top:257px;" width="16" height="16"><use href="#recycle" width="16" height="16"/></svg>
<div style="position:absolute;left:281px;top:258px;white-space:pre;font-size:12.25px;line-height:14px;-webkit-text-stroke:0.15px currentColor;color:#000">Contenções</div>
<div style="position:absolute;left:1573px;top:258px;white-space:pre;font-size:12.25px;line-height:14px;-webkit-text-stroke:0.15px currentColor;width:150px;text-align:right;color:#000">1,000</div>
<div style="position:absolute;left:1658px;top:258px;white-space:pre;font-size:12.25px;line-height:14px;-webkit-text-stroke:0.15px currentColor;width:150px;text-align:right;color:#000">13.225,53</div>
<div style="position:absolute;left:1739px;top:258px;white-space:pre;font-size:12.25px;line-height:14px;-webkit-text-stroke:0.15px currentColor;width:150px;text-align:right;color:#000">13.225,53</div>
<div style="position:absolute;left:31px;top:283px;width:4px;height:1px;background:#000"></div>
<svg style="position:absolute;left:42px;top:277px;" width="16" height="12"><use href="#item" width="16" height="12"/></svg>
<div style="position:absolute;left:65px;top:276px;white-space:pre;font-size:12.25px;line-height:14px;-webkit-text-stroke:0.15px currentColor;color:#0a0a8c">CCS035</div>
<div style="position:absolute;left:143px;top:276px;white-space:pre;font-size:12px;font-weight:bold;line-height:14px;letter-spacing:0.3px;transform:scaleX(0.9);transform-origin:0 0;color:#0a0a8c">CCS</div>
<svg style="position:absolute;left:184px;top:276px;" width="16" height="14"><use href="#euro" width="16" height="14"/></svg>
<svg style="position:absolute;left:206px;top:275px;" width="16" height="16"><use href="#helmet" width="16" height="16"/></svg>
<svg style="position:absolute;left:231px;top:275px;" width="16" height="16"><use href="#recycle" width="16" height="16"/></svg>
<div style="position:absolute;left:257px;top:276px;white-space:pre;font-size:12.25px;line-height:14px;-webkit-text-stroke:0.15px currentColor;color:#0a0a8c">m³</div>
<div style="position:absolute;left:289px;top:276px;white-space:pre;font-size:12.25px;line-height:14px;-webkit-text-stroke:0.15px currentColor;color:#0a0a8c">Muro de cave de betão armado, realizado com betão C25/30 (X0(P); D25; S3; Cl 0,4) fabricado em central, e betonagem desde camião, e aço A400 NR, quantidade 44,5 kg/m³.</div>
<div style="position:absolute;left:1664px;top:274px;width:62px;height:16px;background:linear-gradient(#e2f4e2,#cdeccd)"></div>
<svg style="position:absolute;left:1665px;top:286px" width="3" height="3" viewBox="0 0 3 3"><path d="M0 0L3 3H0z" fill="#8a0000"/></svg>
<div style="position:absolute;left:1573px;top:276px;white-space:pre;font-size:12.25px;line-height:14px;-webkit-text-stroke:0.15px currentColor;width:150px;text-align:right;color:#0a0a8c">86,930</div>
<div style="position:absolute;left:1658px;top:276px;white-space:pre;font-size:12.25px;line-height:14px;-webkit-text-stroke:0.15px currentColor;width:150px;text-align:right;color:#0a0a8c">152,14</div>
<div style="position:absolute;left:1739px;top:276px;white-space:pre;font-size:12.25px;line-height:14px;-webkit-text-stroke:0.15px currentColor;width:150px;text-align:right;color:#0a0a8c">13.225,53</div>
<div style="position:absolute;left:31px;top:301px;width:4px;height:1px;background:#000"></div>
<svg style="position:absolute;left:42px;top:295px;" width="16" height="11"><use href="#addrow" width="16" height="11"/></svg>
<div style="position:absolute;left:23px;top:319px;width:4px;height:1px;background:#000"></div>
<svg style="position:absolute;left:34px;top:313px;" width="16" height="12"><use href="#folderM" width="16" height="12"/></svg>
<div style="position:absolute;left:57px;top:312px;white-space:pre;font-size:12.25px;line-height:14px;-webkit-text-stroke:0.15px currentColor;color:#000">CS</div>
<svg style="position:absolute;left:176px;top:312px;" width="16" height="13"><use href="#scroll" width="16" height="13"/></svg>
<svg style="position:absolute;left:223px;top:311px;" width="16" height="16"><use href="#recycle" width="16" height="16"/></svg>
<div style="position:absolute;left:281px;top:312px;white-space:pre;font-size:12.25px;line-height:14px;-webkit-text-stroke:0.15px currentColor;color:#000">Superficiais</div>
<div style="position:absolute;left:1573px;top:312px;white-space:pre;font-size:12.25px;line-height:14px;-webkit-text-stroke:0.15px currentColor;width:150px;text-align:right;color:#000">1,000</div>
<div style="position:absolute;left:1658px;top:312px;white-space:pre;font-size:12.25px;line-height:14px;-webkit-text-stroke:0.15px currentColor;width:150px;text-align:right;color:#000">17.736,93</div>
<div style="position:absolute;left:1739px;top:312px;white-space:pre;font-size:12.25px;line-height:14px;-webkit-text-stroke:0.15px currentColor;width:150px;text-align:right;color:#000">17.736,93</div>
<div style="position:absolute;left:31px;top:337px;width:4px;height:1px;background:#000"></div>
<div style="position:absolute;left:34px;top:328px;width:1858px;height:18px;border:1px solid #8a8a8a;border-right:none"></div>
<svg style="position:absolute;left:42px;top:331px;" width="16" height="12"><use href="#item" width="16" height="12"/></svg>
<div style="position:absolute;left:65px;top:330px;white-space:pre;font-size:12.25px;line-height:14px;-webkit-text-stroke:0.15px currentColor;color:#0a0a8c">CSZ035</div>
<div style="position:absolute;left:138px;top:326px;width:44px;height:20px;border:1px solid #b0b0b0;background:#fff"></div>
<div style="position:absolute;left:140px;top:328px;width:40px;height:16px;border:1px solid #707070"></div>
<div style="position:absolute;left:143px;top:330px;white-space:pre;font-size:12px;font-weight:bold;line-height:14px;letter-spacing:0.3px;transform:scaleX(0.9);transform-origin:0 0;color:#0a0a8c">CSZ</div>
<svg style="position:absolute;left:184px;top:330px;" width="16" height="14"><use href="#euro" width="16" height="14"/></svg>
<svg style="position:absolute;left:206px;top:329px;" width="16" height="16"><use href="#helmet" width="16" height="16"/></svg>
<svg style="position:absolute;left:231px;top:329px;" width="16" height="16"><use href="#recycle" width="16" height="16"/></svg>
<div style="position:absolute;left:257px;top:330px;white-space:pre;font-size:12.25px;line-height:14px;-webkit-text-stroke:0.15px currentColor;color:#0a0a8c">m³</div>
<div style="position:absolute;left:289px;top:330px;white-space:pre;font-size:12.25px;line-height:14px;-webkit-text-stroke:0.15px currentColor;color:#0a0a8c">Sapata de betão armado, realizada com betão C25/30 (X0(P); D25; S3; Cl 0,4) fabricado em central, e betonagem desde camião, e aço A400 NR, quantidade 66,4 kg/m³.</div>
<div style="position:absolute;left:1664px;top:328px;width:62px;height:16px;background:linear-gradient(#e2f4e2,#cdeccd)"></div>
<svg style="position:absolute;left:1665px;top:340px" width="3" height="3" viewBox="0 0 3 3"><path d="M0 0L3 3H0z" fill="#8a0000"/></svg>
<svg style="position:absolute;left:1722px;top:340px" width="3" height="3" viewBox="0 0 3 3"><path d="M3 0v3H0z" fill="#109010"/></svg>
<div style="position:absolute;left:1573px;top:330px;white-space:pre;font-size:12.25px;line-height:14px;-webkit-text-stroke:0.15px currentColor;width:150px;text-align:right;color:#0a0a8c">74,118</div>
<div style="position:absolute;left:1658px;top:330px;white-space:pre;font-size:12.25px;line-height:14px;-webkit-text-stroke:0.15px currentColor;width:150px;text-align:right;color:#0a0a8c">171,95</div>
<div style="position:absolute;left:1739px;top:330px;white-space:pre;font-size:12.25px;line-height:14px;-webkit-text-stroke:0.15px currentColor;width:150px;text-align:right;color:#0a0a8c">12.744,59</div>
<div style="position:absolute;left:31px;top:355px;width:4px;height:1px;background:#000"></div>
<svg style="position:absolute;left:42px;top:349px;" width="16" height="12"><use href="#item" width="16" height="12"/></svg>
<div style="position:absolute;left:65px;top:348px;white-space:pre;font-size:12.25px;line-height:14px;-webkit-text-stroke:0.15px currentColor;color:#0a0a8c">CSZ035b</div>
<div style="position:absolute;left:143px;top:348px;white-space:pre;font-size:12px;font-weight:bold;line-height:14px;letter-spacing:0.3px;transform:scaleX(0.9);transform-origin:0 0;color:#0a0a8c">CSZ</div>
<svg style="position:absolute;left:184px;top:348px;" width="16" height="14"><use href="#euro" width="16" height="14"/></svg>
<svg style="position:absolute;left:206px;top:347px;" width="16" height="16"><use href="#helmet" width="16" height="16"/></svg>
<svg style="position:absolute;left:231px;top:347px;" width="16" height="16"><use href="#recycle" width="16" height="16"/></svg>
<div style="position:absolute;left:257px;top:348px;white-space:pre;font-size:12.25px;line-height:14px;-webkit-text-stroke:0.15px currentColor;color:#0a0a8c">m³</div>
<div style="position:absolute;left:289px;top:348px;white-space:pre;font-size:12.25px;line-height:14px;-webkit-text-stroke:0.15px currentColor;color:#0a0a8c">Sapata de betão armado, realizada com betão C25/30 (X0(P); D25; S3; Cl 0,4) fabricado em central, e betonagem desde camião, e aço A400 NR, quantidade 73,5 kg/m³.</div>
<div style="position:absolute;left:1664px;top:346px;width:62px;height:16px;background:linear-gradient(#e2f4e2,#cdeccd)"></div>
<svg style="position:absolute;left:1665px;top:358px" width="3" height="3" viewBox="0 0 3 3"><path d="M0 0L3 3H0z" fill="#8a0000"/></svg>
<div style="position:absolute;left:1573px;top:348px;white-space:pre;font-size:12.25px;line-height:14px;-webkit-text-stroke:0.15px currentColor;width:150px;text-align:right;color:#0a0a8c">28,110</div>
<div style="position:absolute;left:1658px;top:348px;white-space:pre;font-size:12.25px;line-height:14px;-webkit-text-stroke:0.15px currentColor;width:150px;text-align:right;color:#0a0a8c">177,60</div>
<div style="position:absolute;left:1739px;top:348px;white-space:pre;font-size:12.25px;line-height:14px;-webkit-text-stroke:0.15px currentColor;width:150px;text-align:right;color:#0a0a8c">4.992,34</div>
<div style="position:absolute;left:31px;top:373px;width:4px;height:1px;background:#000"></div>
<svg style="position:absolute;left:42px;top:367px;" width="16" height="11"><use href="#addrow" width="16" height="11"/></svg>
<div style="position:absolute;left:6px;top:380px;width:1908px;height:6px;background:#f0f0f0"></div>
<div style="position:absolute;left:6px;top:382px;width:1908px;height:1px;background:#111"></div>
<div style="position:absolute;left:6px;top:385px;width:1908px;height:1px;background:#111"></div>
<div style="position:absolute;left:6px;top:383px;width:1908px;height:2px;background:#d8d8d8"></div>
<div style="position:absolute;left:6px;top:386px;width:1908px;height:24px;background:linear-gradient(#f7f7f7,#f0f0f0 40%,#dcdcdc)"></div>
<svg style="position:absolute;left:10px;top:391px" width="16" height="14" viewBox="0 0 16 14"><path d="M2 4.5Q1 2 3.5 1.2h3l1.5 1.6h5q2.2 0 2.2 2.2v5.5q0 1.8-1.6 1.8H3.2Q1 12.3 1 10.5z" fill="#222"/><path d="M1.5 3.8Q1 1 3.5 0.8h3l1.5 1.4h5q2 0 2 2v5.3q0 1.5-1.5 1.5H2.8Q1 11 1 9.3z" fill="#ffff20" stroke="#000" stroke-width="0.9"/><path d="M3.5 3.5h2q2 0 2 2.8t-2 2.8h-2z" fill="none" stroke="#f01010" stroke-width="1.3"/><circle cx="11" cy="6.5" r="2" fill="none" stroke="#f01010" stroke-width="1.3"/></svg>
<svg style="position:absolute;left:36px;top:391px" width="15" height="14" viewBox="0 0 15 14"><path d="M0.5 0.5h8l3.5 3.5v9.5H0.5z" fill="#fff" stroke="#000"/><path d="M8.5 0.5v3.5H12" fill="none" stroke="#000" stroke-width="0.8"/><path d="M1.5 8.2l3-2.2h8v4.5h-8z" fill="#ffee00" stroke="#000" stroke-width="0.9"/><path d="M1.5 8.2l2-1.4v2.8z" fill="#888"/><rect x="11.5" y="6" width="2.5" height="4.5" fill="#f01010" stroke="#000" stroke-width="0.6"/></svg>
<svg style="position:absolute;left:57px;top:390px" width="16" height="16" viewBox="0 0 16 16"><rect x="1" y="1" width="15" height="15" fill="#000"/><rect x="0" y="0" width="15" height="15" fill="#777"/><rect x="1.5" y="1.5" width="5" height="5" fill="#10f0f8"/><rect x="8.5" y="1.5" width="5" height="5" fill="#10f0f8"/><rect x="1.5" y="8.5" width="5" height="5" fill="#10f0f8"/><rect x="8.5" y="8.5" width="5" height="5" fill="#10f0f8"/><path d="M2.5 5.5l3-3M9.5 5.5l3-3M2.5 12.5l3-3M9.5 12.5l3-3" stroke="#fff" stroke-width="0.8"/></svg>
<svg style="position:absolute;left:80px;top:390px" width="16" height="16" viewBox="0 0 16 16"><rect x="1.5" y="2.5" width="11" height="13" fill="#333"/><rect x="0.5" y="1.5" width="11" height="13" fill="#fff" stroke="#000"/><path d="M2 4.5h5M2 6.5h4M2 8.5h5M2 10.5h3M2 12.5h3" stroke="#000" stroke-width="0.9"/><path d="M5 11.5l8-8" stroke="#1020b0" stroke-width="2.2"/><path d="M12 4.5l3-3.5" stroke="#ffe000" stroke-width="2.4"/></svg>
<svg style="position:absolute;left:103px;top:390px" width="16" height="16" viewBox="0 0 16 16"><path d="M0.5 9.5l8-8.5 7.5 5.5-8 8.5z" fill="#8a10b0" stroke="#300040" stroke-width="0.8"/><path d="M0.5 9.5v2l7.5 4.5 8-8.5v-2l-8 8.5z" fill="#fff" stroke="#300040" stroke-width="0.7"/><path d="M8 16v-2" stroke="#300040"/><text x="6.2" y="9.5" font-size="7.5" font-weight="bold" font-family="Liberation Sans" fill="#ffe000" transform="rotate(-12 8 7)">?</text></svg>
<svg style="position:absolute;left:126px;top:390px" width="16" height="16" viewBox="0 0 16 16"><path d="M0.5 0.5h6.5l2.5 2.5v6.5h-9z" fill="#fff" stroke="#000"/><path d="M2.2 2.2h2.3q2.3 0 2.3 2.6t-2.3 2.6H2.2z" fill="none" stroke="#000" stroke-width="1"/><path d="M1 10.5h6M1 12.5h6M1 14.5h6" stroke="#222" stroke-width="1.2" stroke-dasharray="1 0.8"/><rect x="7.5" y="6" width="8.5" height="7" rx="1" fill="#000"/><rect x="9" y="7.5" width="5.5" height="2.5" fill="#fff"/><rect x="8.5" y="13" width="6" height="2" fill="#555"/></svg>
<div style="position:absolute;left:6px;top:411px;width:90px;height:591px;background:#f0f0f0;border:1px solid #6a6a6a;border-top:none"></div>
<div style="position:absolute;left:6px;top:411px;width:90px;height:37px;background:#fff;border-top:2px solid #555;border-left:2px solid #666;border-right:2px solid #111;border-bottom:1px solid #111"></div>
<div style="position:absolute;left:8px;top:413px;width:19px;height:17px;background:#fff;border-bottom:1px solid #c8c8c8"></div>
<svg style="position:absolute;left:11px;top:414px;" width="14" height="14"><use href="#cd" width="14" height="14"/></svg>
<div style="position:absolute;left:28px;top:412px;width:46px;height:19px;background:#fff;border:1px solid #a0a0a0"></div>
<div style="position:absolute;left:29px;top:413px;width:44px;height:17px;border:1px solid #c8c8c8"></div>
<div style="position:absolute;left:32px;top:414px;white-space:pre;font-size:12px;line-height:15px;color:#000;letter-spacing:0.3px;-webkit-text-stroke:0.3px #000">CSZ</div>
<div style="position:absolute;left:74px;top:413px;width:20px;height:17px;background:#fff;border-bottom:1px solid #c8c8c8"></div>
<svg style="position:absolute;left:77px;top:414px;" width="14" height="14"><use href="#cd" width="14" height="14"/></svg>
<svg style="position:absolute;left:38px;top:433px" width="16" height="11" viewBox="0 0 16 11"><rect x="1.5" y="1.5" width="14" height="9" fill="#444"/><rect x="0.5" y="0.5" width="14" height="8.5" fill="#fff" stroke="#000"/><path d="M4.5 4.5h6l-3 3.3z" fill="#f01010"/><rect x="6.5" y="2" width="2" height="3" fill="#f01010"/></svg>
<div style="position:absolute;left:98px;top:437px;width:1815px;height:565px;background:#fff;border-top:1px solid #6a6a6a;border-left:1px solid #6a6a6a;border-right:1px solid #6a6a6a;border-bottom:1px solid #6a6a6a"></div>
<div style="position:absolute;left:1896px;top:438px;width:16px;height:563px;background:#f0f0f0"></div>
<div style="position:absolute;left:1903px;top:455px;width:2px;height:27px;background:#8a8a8a"></div>
<div style="position:absolute;left:626px;top:479.24px;white-space:pre;font-size:19.5px;line-height:23px;font-weight:bold;color:#008000;-webkit-text-stroke:0.4px #008000">C</div>
<div style="position:absolute;left:660px;top:479.24px;white-space:pre;font-size:19.5px;line-height:23px;font-weight:bold;color:#004d00;letter-spacing:0.7px;-webkit-text-stroke:0.4px #004d00">FUNDAÇÕES</div>
<div style="position:absolute;left:639px;top:514px;width:6px;height:6px;background:#000"></div>
<div style="position:absolute;left:667px;top:510.67px;width:712px;white-space:pre;font-size:12.5px;line-height:14px;color:#000;letter-spacing:0.72px;-webkit-text-stroke:0.2px #000;text-align:justify;text-align-last:justify;">O proprietário conservará em seu poder a documentação técnica relativa aos elementos da fundação, onde</div>
<div style="position:absolute;left:667px;top:524.67px;width:456.5px;white-space:pre;font-size:12.5px;line-height:14px;color:#000;letter-spacing:0.72px;-webkit-text-stroke:0.2px #000;text-align:justify;text-align-last:justify;">estarão presentes as solicitações para as quais o edifício foi projectado.</div>
<div style="position:absolute;left:639px;top:549px;width:6px;height:6px;background:#000"></div>
<div style="position:absolute;left:667px;top:545.67px;width:712px;white-space:pre;font-size:12.5px;line-height:14px;color:#000;letter-spacing:0.72px;-webkit-text-stroke:0.2px #000;text-align:justify;text-align-last:justify;">Qualquer alteração dos elementos da fundação que possam alterar as condições de trabalho previstas no</div>
<div style="position:absolute;left:667px;top:559.67px;width:712px;white-space:pre;font-size:12.5px;line-height:14px;color:#000;letter-spacing:0.72px;-webkit-text-stroke:0.2px #000;text-align:justify;text-align-last:justify;">projecto deve ser justificada e comprovada mediante os cálculos oportunos, realizados por um técnico</div>
<div style="position:absolute;left:667px;top:573.67px;white-space:pre;font-size:12.5px;line-height:14px;color:#000;letter-spacing:0.72px;-webkit-text-stroke:0.2px #000;">competente.</div>
<div style="position:absolute;left:639px;top:598px;width:6px;height:6px;background:#000"></div>
<div style="position:absolute;left:667px;top:594.67px;width:712px;white-space:pre;font-size:12.5px;line-height:14px;color:#000;letter-spacing:0.72px;-webkit-text-stroke:0.2px #000;text-align:justify;text-align-last:justify;">A fundação é de difícil manutenção; um dos factores que mais prejudicará o seu funcionamento é a humidade,</div>
<div style="position:absolute;left:667px;top:608.67px;width:242.5px;white-space:pre;font-size:12.5px;line-height:14px;color:#000;letter-spacing:0.72px;-webkit-text-stroke:0.2px #000;text-align:justify;text-align-last:justify;">pelo que a sua prevenção é essencial.</div>
<div style="position:absolute;left:626px;top:638.80px;white-space:pre;font-size:15px;line-height:18px;font-weight:bold;letter-spacing:1.45px;-webkit-text-stroke:0.4px currentColor;color:#008000;letter-spacing:0.4px">CSZ</div>
<div style="position:absolute;left:677.5px;top:638.80px;white-space:pre;font-size:15px;line-height:18px;font-weight:bold;letter-spacing:1.45px;-webkit-text-stroke:0.4px currentColor;color:#008000;letter-spacing:0.75px">FUNDAÇÕES</div>
<div style="position:absolute;left:784px;top:636px;width:1px;height:22px;background:#000"></div>
<div style="position:absolute;left:788.5px;top:638.80px;white-space:pre;font-size:15px;line-height:18px;font-weight:bold;letter-spacing:1.45px;-webkit-text-stroke:0.4px currentColor;color:#008000">SUPERFICIAIS</div>
<div style="position:absolute;left:916px;top:636px;width:1px;height:22px;background:#000"></div>
<div style="position:absolute;left:920px;top:638.80px;white-space:pre;font-size:15px;line-height:18px;font-weight:bold;letter-spacing:1.45px;-webkit-text-stroke:0.4px currentColor;color:#004d00;letter-spacing:1.2px">SAPATAS</div>
<div style="position:absolute;left:640.5px;top:672.94px;white-space:pre;font-size:14.6px;line-height:18px;font-weight:bold;letter-spacing:1.5px;color:#000;-webkit-text-stroke:0.4px #000">UTILIZAÇÃO</div>
<div style="position:absolute;left:640.5px;top:697.84px;white-space:pre;font-size:12px;line-height:14px;font-weight:bold;letter-spacing:0.55px;color:#000;-webkit-text-stroke:0.3px #000">PRECAUÇÕES</div>
<div style="position:absolute;left:639px;top:722px;width:6px;height:6px;background:#000"></div>
<div style="position:absolute;left:667px;top:718.67px;width:712px;white-space:pre;font-size:12.5px;line-height:14px;color:#000;letter-spacing:0.72px;-webkit-text-stroke:0.2px #000;text-align:justify;text-align-last:justify;">Serão reparadas rapidamente as redes de saneamento ou abastecimento, em caso de se produzirem fugas,</div>
<div style="position:absolute;left:667px;top:732.67px;width:202.0px;white-space:pre;font-size:12.5px;line-height:14px;color:#000;letter-spacing:0.72px;-webkit-text-stroke:0.2px #000;text-align:justify;text-align-last:justify;">para evitar danos e humidades.</div>
<div style="position:absolute;left:639px;top:757px;width:6px;height:6px;background:#000"></div>
<div style="position:absolute;left:667px;top:753.67px;width:712px;white-space:pre;font-size:12.5px;line-height:14px;color:#000;letter-spacing:0.72px;-webkit-text-stroke:0.2px #000;text-align:justify;text-align-last:justify;">Será comunicado a um técnico competente o aparecimento de danos por causa de escavações ou novas</div>
<div style="position:absolute;left:667px;top:767.67px;width:141.5px;white-space:pre;font-size:12.5px;line-height:14px;color:#000;letter-spacing:0.72px;-webkit-text-stroke:0.2px #000;text-align:justify;text-align-last:justify;">construções próximas.</div>
<div style="position:absolute;left:639px;top:792px;width:6px;height:6px;background:#000"></div>
<div style="position:absolute;left:667px;top:788.67px;width:605.5px;white-space:pre;font-size:12.5px;line-height:14px;color:#000;letter-spacing:0.72px;-webkit-text-stroke:0.2px #000;text-align:justify;text-align-last:justify;">As sapatas, salvo se tenha previsto anteriormente, não estarão expostas à humidade habitual.</div>
<div style="position:absolute;left:639px;top:813px;width:6px;height:6px;background:#000"></div>
<div style="position:absolute;left:667px;top:809.67px;width:636.5px;white-space:pre;font-size:12.5px;line-height:14px;color:#000;letter-spacing:0.72px;-webkit-text-stroke:0.2px #000;text-align:justify;text-align-last:justify;">Denunciar-se-á qualquer fuga observada nas canalizações de abastecimento ou drenagem de água.</div>
<div style="position:absolute;left:640.5px;top:830.34px;white-space:pre;font-size:12px;line-height:14px;font-weight:bold;letter-spacing:0.55px;color:#000;-webkit-text-stroke:0.3px #000">PRESCRIÇÕES</div>
<div style="position:absolute;left:639px;top:855px;width:6px;height:6px;background:#000"></div>
<div style="position:absolute;left:667px;top:851.67px;width:712px;white-space:pre;font-size:12.5px;line-height:14px;color:#000;letter-spacing:0.72px;-webkit-text-stroke:0.2px #000;text-align:justify;text-align-last:justify;">O proprietário deverá conservar em seu poder a documentação técnica relativa às sapatas de betão armado</div>
<div style="position:absolute;left:667px;top:865.67px;width:699.5px;white-space:pre;font-size:12.5px;line-height:14px;color:#000;letter-spacing:0.72px;-webkit-text-stroke:0.2px #000;text-align:justify;text-align-last:justify;">construídas para fundação, na qual figurarão as cargas previstas, assim como as suas características técnicas.</div>
<div style="position:absolute;left:639px;top:890px;width:6px;height:6px;background:#000"></div>
<div style="position:absolute;left:667px;top:886.67px;width:706.5px;white-space:pre;font-size:12.5px;line-height:14px;color:#000;letter-spacing:0.72px;-webkit-text-stroke:0.2px #000;text-align:justify;text-align-last:justify;">A zona da fundação deve manter-se no mesmo estado em que se encontrava aquando da execução das obras.</div>
<div style="position:absolute;left:639px;top:911px;width:6px;height:6px;background:#000"></div>
<div style="position:absolute;left:667px;top:907.67px;width:616.5px;white-space:pre;font-size:12.5px;line-height:14px;color:#000;letter-spacing:0.72px;-webkit-text-stroke:0.2px #000;text-align:justify;text-align-last:justify;">O aparecimento de defeitos, fissuras e ruídos deverão ser transmitidos a um técnico competente.</div>
<div style="position:absolute;left:639px;top:932px;width:6px;height:6px;background:#000"></div>
<div style="position:absolute;left:667px;top:928.67px;width:712px;white-space:pre;font-size:12.5px;line-height:14px;color:#000;letter-spacing:0.72px;-webkit-text-stroke:0.2px #000;text-align:justify;text-align-last:justify;">Nas revisões periódicas de manutenção da estrutura deverá determinar-se a necessidade de um estudo mais</div>
<div style="position:absolute;left:667px;top:942.67px;width:151.5px;white-space:pre;font-size:12.5px;line-height:14px;color:#000;letter-spacing:0.72px;-webkit-text-stroke:0.2px #000;text-align:justify;text-align-last:justify;">detalhado da fundação.</div>
<div style="position:absolute;left:640.5px;top:963.34px;white-space:pre;font-size:12px;line-height:14px;font-weight:bold;letter-spacing:0.55px;color:#000;-webkit-text-stroke:0.3px #000">PROIBIÇÕES</div>
<div style="position:absolute;left:639px;top:987px;width:6px;height:6px;background:#000"></div>
<div style="position:absolute;left:667px;top:983.67px;width:277.0px;white-space:pre;font-size:12.5px;line-height:14px;color:#000;letter-spacing:0.72px;-webkit-text-stroke:0.2px #000;text-align:justify;text-align-last:justify;">Não se realizarão perfurações nas sapatas.</div>
<div style="position:absolute;left:194px;top:469px;width:393px;height:473px;background:#f0f0f0;border:1px solid #a8a8a8;border-radius:8px;box-shadow:0 14px 40px rgba(0,0,0,0.26),0 0 14px rgba(0,0,0,0.10);overflow:hidden"></div>
<div style="position:absolute;left:195px;top:470px;width:391px;height:30px;background:#f3f3f3;border-radius:7px 7px 0 0"></div>
<svg style="position:absolute;left:203px;top:476px;" width="16" height="16"><use href="#appico" width="16" height="16"/></svg>
<div style="position:absolute;left:224.5px;top:478.34px;white-space:pre;font-size:12px;line-height:15px;color:#9a9a9a">Manual de utilização e manutenção do...</div>
<svg style="position:absolute;left:460px;top:474px" width="120" height="20" viewBox="0 0 120 20"><path d="M7 10.5h10" stroke="#d0d0d0"/><path d="M52.5 5.5h9v9h-9z" stroke="#777" fill="none"/><path d="M98 5l10 10M108 5l-10 10" stroke="#777" stroke-width="1.1"/></svg>
<div style="position:absolute;left:563px;top:500px;width:23px;height:441px;background:linear-gradient(90deg,#f0f0f0,#e4e4e4 70%,#dadada);border-bottom-right-radius:7px"></div>
<svg style="position:absolute;left:566px;top:503px;" width="16" height="16"><use href="#help" width="16" height="16"/></svg>
<div style="position:absolute;left:205px;top:510px;width:88px;height:21px;background:#ececec;border:1px solid #e2e2e2;border-bottom:none"></div>
<div style="position:absolute;left:209px;top:514.27px;white-space:pre;font-size:12.2px;line-height:15px;color:#111">C - Fundações</div>
<div style="position:absolute;left:292px;top:508px;width:91px;height:23px;background:#f9f9f9;border:1px solid #e6e6e6;border-bottom:none"></div>
<div style="position:absolute;left:298px;top:511.84px;white-space:pre;font-size:12px;line-height:15px;color:#111">CSZ - Sapatas</div>
<div style="position:absolute;left:203px;top:530px;width:351px;height:363px;background:#f7f7f7;border:1px solid #e4e4e4"></div>
<div style="position:absolute;left:207px;top:532px;width:345px;height:26px;background:#ebebeb"></div>
<div style="position:absolute;left:207px;top:558px;width:345px;height:25px;background:linear-gradient(#f6f6f6,#ececec 50%,#d6d6d6);border-bottom:1px solid #777"></div>
<div style="position:absolute;left:211px;top:536px;width:18px;height:18px;background:#cfe3f6;border:2px solid #1a62b8;border-radius:3px"></div>
<svg style="position:absolute;left:213px;top:538px;" width="14" height="14"><use href="#cd" width="14" height="14"/></svg>
<div style="position:absolute;left:236px;top:536px;width:19px;height:18px;background:#f4f4f4;border-radius:3px"></div>
<svg style="position:absolute;left:237px;top:537px" width="16" height="16" viewBox="0 0 16 16"><circle cx="8" cy="7" r="3.6" fill="#fff" stroke="#888" stroke-width="0.8"/><path d="M5 5.5q0-4.5 5-4.5q3 0 3 4l-8 1z" fill="#fff" stroke="#888" stroke-width="0.8"/><path d="M3 6h9" stroke="#888" stroke-width="1"/><path d="M6.5 8.5q1.5 1.5 3 0" stroke="#bb4" fill="none" stroke-width="0.7"/><path d="M1 16q1-5 7-5t7 5z" fill="#ddd" stroke="#888" stroke-width="0.8"/><rect x="7" y="12" width="2" height="4" fill="#88f"/><rect x="5" y="13" width="1.5" height="2" fill="#dd4"/></svg>
<div style="position:absolute;left:262px;top:536px;width:19px;height:18px;background:#f4f4f4;border-radius:3px"></div>
<svg style="position:absolute;left:264px;top:537px" width="16" height="16" viewBox="0 0 16 16"><path d="M2 9l6-6 6 6v7H2z" fill="#fff" stroke="#777" stroke-width="1"/><path d="M1 2h14M4 0v4" stroke="#777"/><circle cx="5.5" cy="11" r="0.9" fill="#555"/><circle cx="10.5" cy="11" r="0.9" fill="#555"/><circle cx="8" cy="8" r="0.9" fill="#555"/><rect x="7" y="13" width="2" height="3" fill="#555"/></svg>
<div style="position:absolute;left:290px;top:536px;width:45px;height:18px;background:#f4f4f4;border-radius:3px"></div>
<svg style="position:absolute;left:291px;top:537px" width="16" height="16" viewBox="0 0 16 16"><g opacity="0.75"><circle cx="8" cy="8" r="7" fill="#ccc" stroke="#777" stroke-width="0.8"/><path d="M8 8L3 4A7 7 0 0 1 6 1.5zM8 8l5 4a7 7 0 0 1-3 2.5z" fill="#6ce"/><path d="M8 8L1.5 9A7 7 0 0 0 3 12.5zM8 8l6.5-1A7 7 0 0 0 13 3.5z" fill="#9e6"/><path d="M8 8L12 4" stroke="#fff"/></g></svg>
<svg style="position:absolute;left:305px;top:537px" width="16" height="16" viewBox="0 0 16 16"><path d="M2 8h12M5 5L2 8l3 3M11 5l3 3-3 3" stroke="#f06060" stroke-width="1.3" fill="none"/></svg>
<svg style="position:absolute;left:318px;top:537px" width="16" height="16" viewBox="0 0 16 16"><circle cx="8" cy="7" r="3.6" fill="#fff" stroke="#888" stroke-width="0.8"/><path d="M5 5.5q0-4.5 5-4.5q3 0 3 4l-8 1z" fill="#fff" stroke="#888" stroke-width="0.8"/><path d="M3 6h9" stroke="#888" stroke-width="1"/><path d="M6.5 8.5q1.5 1.5 3 0" stroke="#bb4" fill="none" stroke-width="0.7"/><path d="M1 16q1-5 7-5t7 5z" fill="#ddd" stroke="#888" stroke-width="0.8"/><rect x="7" y="12" width="2" height="4" fill="#88f"/><rect x="5" y="13" width="1.5" height="2" fill="#dd4"/></svg>
<div style="position:absolute;left:343px;top:536px;width:45px;height:18px;background:#f4f4f4;border-radius:3px"></div>
<svg style="position:absolute;left:344px;top:537px" width="16" height="16" viewBox="0 0 16 16"><g opacity="0.75"><circle cx="8" cy="8" r="7" fill="#ccc" stroke="#777" stroke-width="0.8"/><path d="M8 8L3 4A7 7 0 0 1 6 1.5zM8 8l5 4a7 7 0 0 1-3 2.5z" fill="#6ce"/><path d="M8 8L1.5 9A7 7 0 0 0 3 12.5zM8 8l6.5-1A7 7 0 0 0 13 3.5z" fill="#9e6"/><path d="M8 8L12 4" stroke="#fff"/></g></svg>
<svg style="position:absolute;left:358px;top:537px" width="16" height="16" viewBox="0 0 16 16"><path d="M2 8h12M5 5L2 8l3 3M11 5l3 3-3 3" stroke="#f06060" stroke-width="1.3" fill="none"/></svg>
<svg style="position:absolute;left:371px;top:537px" width="16" height="16" viewBox="0 0 16 16"><path d="M2 9l6-6 6 6v7H2z" fill="#fff" stroke="#777" stroke-width="1"/><path d="M1 2h14M4 0v4" stroke="#777"/><circle cx="5.5" cy="11" r="0.9" fill="#555"/><circle cx="10.5" cy="11" r="0.9" fill="#555"/><circle cx="8" cy="8" r="0.9" fill="#555"/><rect x="7" y="13" width="2" height="3" fill="#555"/></svg>
<div style="position:absolute;left:397px;top:536px;width:45px;height:18px;background:#f4f4f4;border-radius:3px"></div>
<svg style="position:absolute;left:398px;top:537px" width="16" height="16" viewBox="0 0 16 16"><circle cx="8" cy="7" r="3.6" fill="#fff" stroke="#888" stroke-width="0.8"/><path d="M5 5.5q0-4.5 5-4.5q3 0 3 4l-8 1z" fill="#fff" stroke="#888" stroke-width="0.8"/><path d="M3 6h9" stroke="#888" stroke-width="1"/><path d="M6.5 8.5q1.5 1.5 3 0" stroke="#bb4" fill="none" stroke-width="0.7"/><path d="M1 16q1-5 7-5t7 5z" fill="#ddd" stroke="#888" stroke-width="0.8"/><rect x="7" y="12" width="2" height="4" fill="#88f"/><rect x="5" y="13" width="1.5" height="2" fill="#dd4"/></svg>
<svg style="position:absolute;left:412px;top:537px" width="16" height="16" viewBox="0 0 16 16"><path d="M2 8h12M5 5L2 8l3 3M11 5l3 3-3 3" stroke="#f06060" stroke-width="1.3" fill="none"/></svg>
<svg style="position:absolute;left:425px;top:537px" width="16" height="16" viewBox="0 0 16 16"><path d="M2 9l6-6 6 6v7H2z" fill="#fff" stroke="#777" stroke-width="1"/><path d="M1 2h14M4 0v4" stroke="#777"/><circle cx="5.5" cy="11" r="0.9" fill="#555"/><circle cx="10.5" cy="11" r="0.9" fill="#555"/><circle cx="8" cy="8" r="0.9" fill="#555"/><rect x="7" y="13" width="2" height="3" fill="#555"/></svg>
<div style="position:absolute;left:450px;top:536px;width:19px;height:18px;background:#f4f4f4;border-radius:3px"></div>
<svg style="position:absolute;left:452px;top:537px" width="16" height="16" viewBox="0 0 16 16"><circle cx="8" cy="6" r="4" fill="#fff" stroke="#000" stroke-width="1"/><path d="M4 5q4-5 8 0" fill="#ffe" stroke="#000"/><path d="M1 16q1-5 7-5t7 5z" fill="#444" stroke="#000"/><rect x="7" y="12" width="2" height="4" fill="#22f"/><path d="M12 1l1 2 2-1-1 2 2 1-2 1 1 2-2-1-1 2-1-2" fill="#ff0"/></svg>
<div style="position:absolute;left:476px;top:536px;width:19px;height:18px;background:#f4f4f4;border-radius:3px"></div>
<svg style="position:absolute;left:478px;top:537px" width="16" height="16" viewBox="0 0 16 16"><path d="M2 9l6-6 6 6v7H2z" fill="#fff" stroke="#000" stroke-width="1.2"/><path d="M1 2h8M4 0v4" stroke="#000"/><circle cx="5.5" cy="11" r="1.1" fill="#000"/><circle cx="10.5" cy="11" r="1.1" fill="#000"/><circle cx="8" cy="8" r="1.1" fill="#000"/><rect x="7" y="13" width="2" height="3" fill="#000"/><path d="M12 1l1 2 2-1-1 2 2 1-2 1 1 2-2-1-1 2-1-2" fill="#ff0"/></svg>
<div style="position:absolute;left:502px;top:536px;width:19px;height:18px;background:#f4f4f4;border-radius:3px"></div>
<svg style="position:absolute;left:504px;top:537px" width="16" height="16" viewBox="0 0 16 16"><circle cx="8" cy="7" r="3.6" fill="#fff" stroke="#888" stroke-width="0.8"/><path d="M5 5.5q0-4.5 5-4.5q3 0 3 4l-8 1z" fill="#fff" stroke="#888" stroke-width="0.8"/><path d="M3 6h9" stroke="#888" stroke-width="1"/><path d="M6.5 8.5q1.5 1.5 3 0" stroke="#bb4" fill="none" stroke-width="0.7"/><path d="M1 16q1-5 7-5t7 5z" fill="#ddd" stroke="#888" stroke-width="0.8"/><rect x="7" y="12" width="2" height="4" fill="#88f"/><rect x="5" y="13" width="1.5" height="2" fill="#dd4"/><path d="M9 1l6 6M15 1l-6 6" stroke="#f06070" stroke-width="1.6"/></svg>
<div style="position:absolute;left:528px;top:536px;width:19px;height:18px;background:#f4f4f4;border-radius:3px"></div>
<svg style="position:absolute;left:530px;top:537px" width="16" height="16" viewBox="0 0 16 16"><path d="M2 9l6-6 6 6v7H2z" fill="#fff" stroke="#777" stroke-width="1"/><path d="M1 2h14M4 0v4" stroke="#777"/><circle cx="5.5" cy="11" r="0.9" fill="#555"/><circle cx="10.5" cy="11" r="0.9" fill="#555"/><circle cx="8" cy="8" r="0.9" fill="#555"/><rect x="7" y="13" width="2" height="3" fill="#555"/><path d="M9 1l6 6M15 1l-6 6" stroke="#f06070" stroke-width="1.6"/></svg>
<svg style="position:absolute;left:211px;top:561px" width="16" height="16" viewBox="0 0 16 16"><rect x="1.5" y="2.5" width="11" height="12" fill="#fff" stroke="#000"/><path d="M1 15L14 2" stroke="#333" stroke-width="2.5"/></svg>
<svg style="position:absolute;left:232px;top:561px" width="16" height="16" viewBox="0 0 16 16"><path d="M0.5 0.5h7l2 2v10h-9z" fill="#fff" stroke="#555" stroke-dasharray="1 0.5"/><path d="M4.5 3.5h7l3 3v9h-10z" fill="#fff" stroke="#000"/></svg>
<svg style="position:absolute;left:256px;top:561px" width="16" height="16" viewBox="0 0 16 16"><rect x="4.5" y="0.5" width="11" height="3" rx="1.5" fill="#fff" stroke="#000"/><rect x="4.5" y="5" width="11" height="3" rx="1.5" fill="#fff" stroke="#000"/><path d="M4 12h12" stroke="#000" stroke-width="1.4" stroke-dasharray="1.4 1"/><path d="M1 9v5l3-1" stroke="#000" fill="none"/></svg>
<div style="position:absolute;left:276px;top:558px;width:23px;height:21px;background:#cfe5f8;border:1px solid #a0cdf0;border-radius:3px"></div>
<svg style="position:absolute;left:280px;top:562px" width="16" height="14" viewBox="0 0 16 14"><rect x="0.5" y="1.5" width="15" height="11" fill="#ffee00" stroke="#000" stroke-width="1.4"/><path d="M2 5h12M2 8h12M5 3v2M9 5v3M4 8v3M11 8v3" stroke="#000" stroke-width="0.8"/></svg>
<svg style="position:absolute;left:303px;top:561px" width="16" height="16" viewBox="0 0 16 16"><path d="M5 15V6H2l4.5-5L11 6H8v6h7v3z" fill="#d8a060" stroke="#8a4a10" stroke-width="1"/></svg>
<div style="position:absolute;left:331.5px;top:563.31px;white-space:pre;font-size:12.1px;line-height:15px;font-weight:bold;color:#111">Dados do programa</div>
<div style="position:absolute;left:207px;top:582px;width:343px;height:232px;background:#fff;border-top:2px solid #666;border-left:2px solid #555;border-right:1px solid #e8e8e8;border-bottom:1px solid #e8e8e8"></div>
<div style="position:absolute;left:533px;top:584px;width:16px;height:229px;background:#f0f0f0"></div>
<div style="position:absolute;left:540px;top:745px;width:2px;height:34px;background:#8a8a8a"></div>
<div style="position:absolute;left:273px;top:592px;width:8px;height:4px;border:1px solid #000;border-radius:2px;background:#d8d8d8"></div>
<div style="position:absolute;left:288.3px;top:587.44px;white-space:pre;font-size:12.3px;line-height:15px;color:#111">Será proibida qualquer utilização que</div>
<div style="position:absolute;left:288.3px;top:602.29px;white-space:pre;font-size:12.3px;line-height:15px;color:#111">produza uma humidade maior que a</div>
<div style="position:absolute;left:288.3px;top:617.14px;white-space:pre;font-size:12.3px;line-height:15px;color:#111">habitual.</div>
<div style="position:absolute;left:234.4px;top:636.44px;white-space:pre;font-size:12.3px;line-height:15px;color:#111">Manutenção</div>
<div style="position:absolute;left:252.2px;top:658.34px;white-space:pre;font-size:12.3px;line-height:15px;color:#111">Pelo utilizador</div>
<div style="position:absolute;left:269px;top:678px;width:263px;height:21px;background:#c0c0c0"></div>
<div style="position:absolute;left:269px;top:700px;width:263px;height:63px;background:#c0c0c0"></div>
<div style="position:absolute;left:273px;top:685px;width:8px;height:4px;border:1px solid #000;border-radius:2px;background:#d8d8d8"></div>
<div style="position:absolute;left:288.3px;top:679.64px;white-space:pre;font-size:12.3px;line-height:15px;color:#111">De 5 em 5 anos:</div>
<div style="position:absolute;left:292px;top:707px;width:6px;height:4px;border:1px solid #000;border-radius:2px;background:#d0d0d0"></div>
<div style="position:absolute;left:306.2px;top:702.44px;white-space:pre;font-size:12.3px;line-height:15px;color:#111">Será comunicado a um técnico</div>
<div style="position:absolute;left:306.2px;top:717.29px;white-space:pre;font-size:12.3px;line-height:15px;color:#111">competente o aparecimento de danos</div>
<div style="position:absolute;left:306.2px;top:732.14px;white-space:pre;font-size:12.3px;line-height:15px;color:#111">por causa de escavações ou novas</div>
<div style="position:absolute;left:306.2px;top:746.99px;white-space:pre;font-size:12.3px;line-height:15px;color:#111">construções próximas.</div>
<div style="position:absolute;left:252.2px;top:766.44px;white-space:pre;font-size:12.3px;line-height:15px;color:#111">Pelo profissional qualificado</div>
<div style="position:absolute;left:372px;top:818px;width:2px;height:2px;background:#a8a8a8"></div>
<div style="position:absolute;left:376px;top:818px;width:2px;height:2px;background:#a8a8a8"></div>
<div style="position:absolute;left:380px;top:818px;width:2px;height:2px;background:#a8a8a8"></div>
<div style="position:absolute;left:384px;top:818px;width:2px;height:2px;background:#a8a8a8"></div>
<div style="position:absolute;left:204px;top:821px;width:348px;height:70px;border:1px solid #e6e6e6;background:#f0f0f0"></div>
<div style="position:absolute;left:208px;top:824px;width:343px;height:64px;background:#efefef;border:1px solid #dcdcdc;border-bottom:1px solid #6a6a6a;border-right:1px solid #d8d8d8"></div>
<div style="position:absolute;left:213.2px;top:827.24px;white-space:pre;font-size:12.3px;line-height:15px;color:#111">De 5 em 5 anos:</div>
<div style="position:absolute;left:195px;top:900px;width:368px;height:1px;background:#c8c8c8"></div>
<div style="position:absolute;left:195px;top:901px;width:368px;height:40px;background:#ececec;border-bottom-left-radius:7px"></div>
<div style="position:absolute;left:202px;top:909px;width:63px;height:25px;background:#fdfdfd;border:1px solid #0067c0;border-radius:4px"></div>
<div style="position:absolute;left:202px;top:915.27px;width:63px;white-space:pre;font-size:12.2px;line-height:15px;color:#111;width:63px;text-align:center">Aceitar</div>
<div style="position:absolute;left:488px;top:909px;width:67px;height:25px;background:#fdfdfd;border:1px solid #d0d0d0;border-bottom-color:#b8b8b8;border-radius:4px"></div>
<div style="position:absolute;left:488px;top:914.70px;width:67px;white-space:pre;font-size:12.4px;line-height:15px;color:#111;text-align:center">Cancelar</div>
<svg style="position:absolute;left:0;top:0" width="400" height="700" viewBox="0 0 400 700">
<rect x="27.5" y="383.5" width="25" height="29" fill="none" stroke="#cc2030" stroke-width="3"/>
<path d="M138 340.5L73 374" stroke="#cc2030" stroke-width="3" fill="none"/>
<path d="M58.3 381.2L69.8 366.6L77.3 380.2z" fill="#cc2030"/>
<path d="M52.5 412L187 664" stroke="#cc2030" stroke-width="3" fill="none"/>
<path d="M194.8 678.8L179.4 667.2L193.3 659.6z" fill="#cc2030"/>
</svg>
</body></html>
